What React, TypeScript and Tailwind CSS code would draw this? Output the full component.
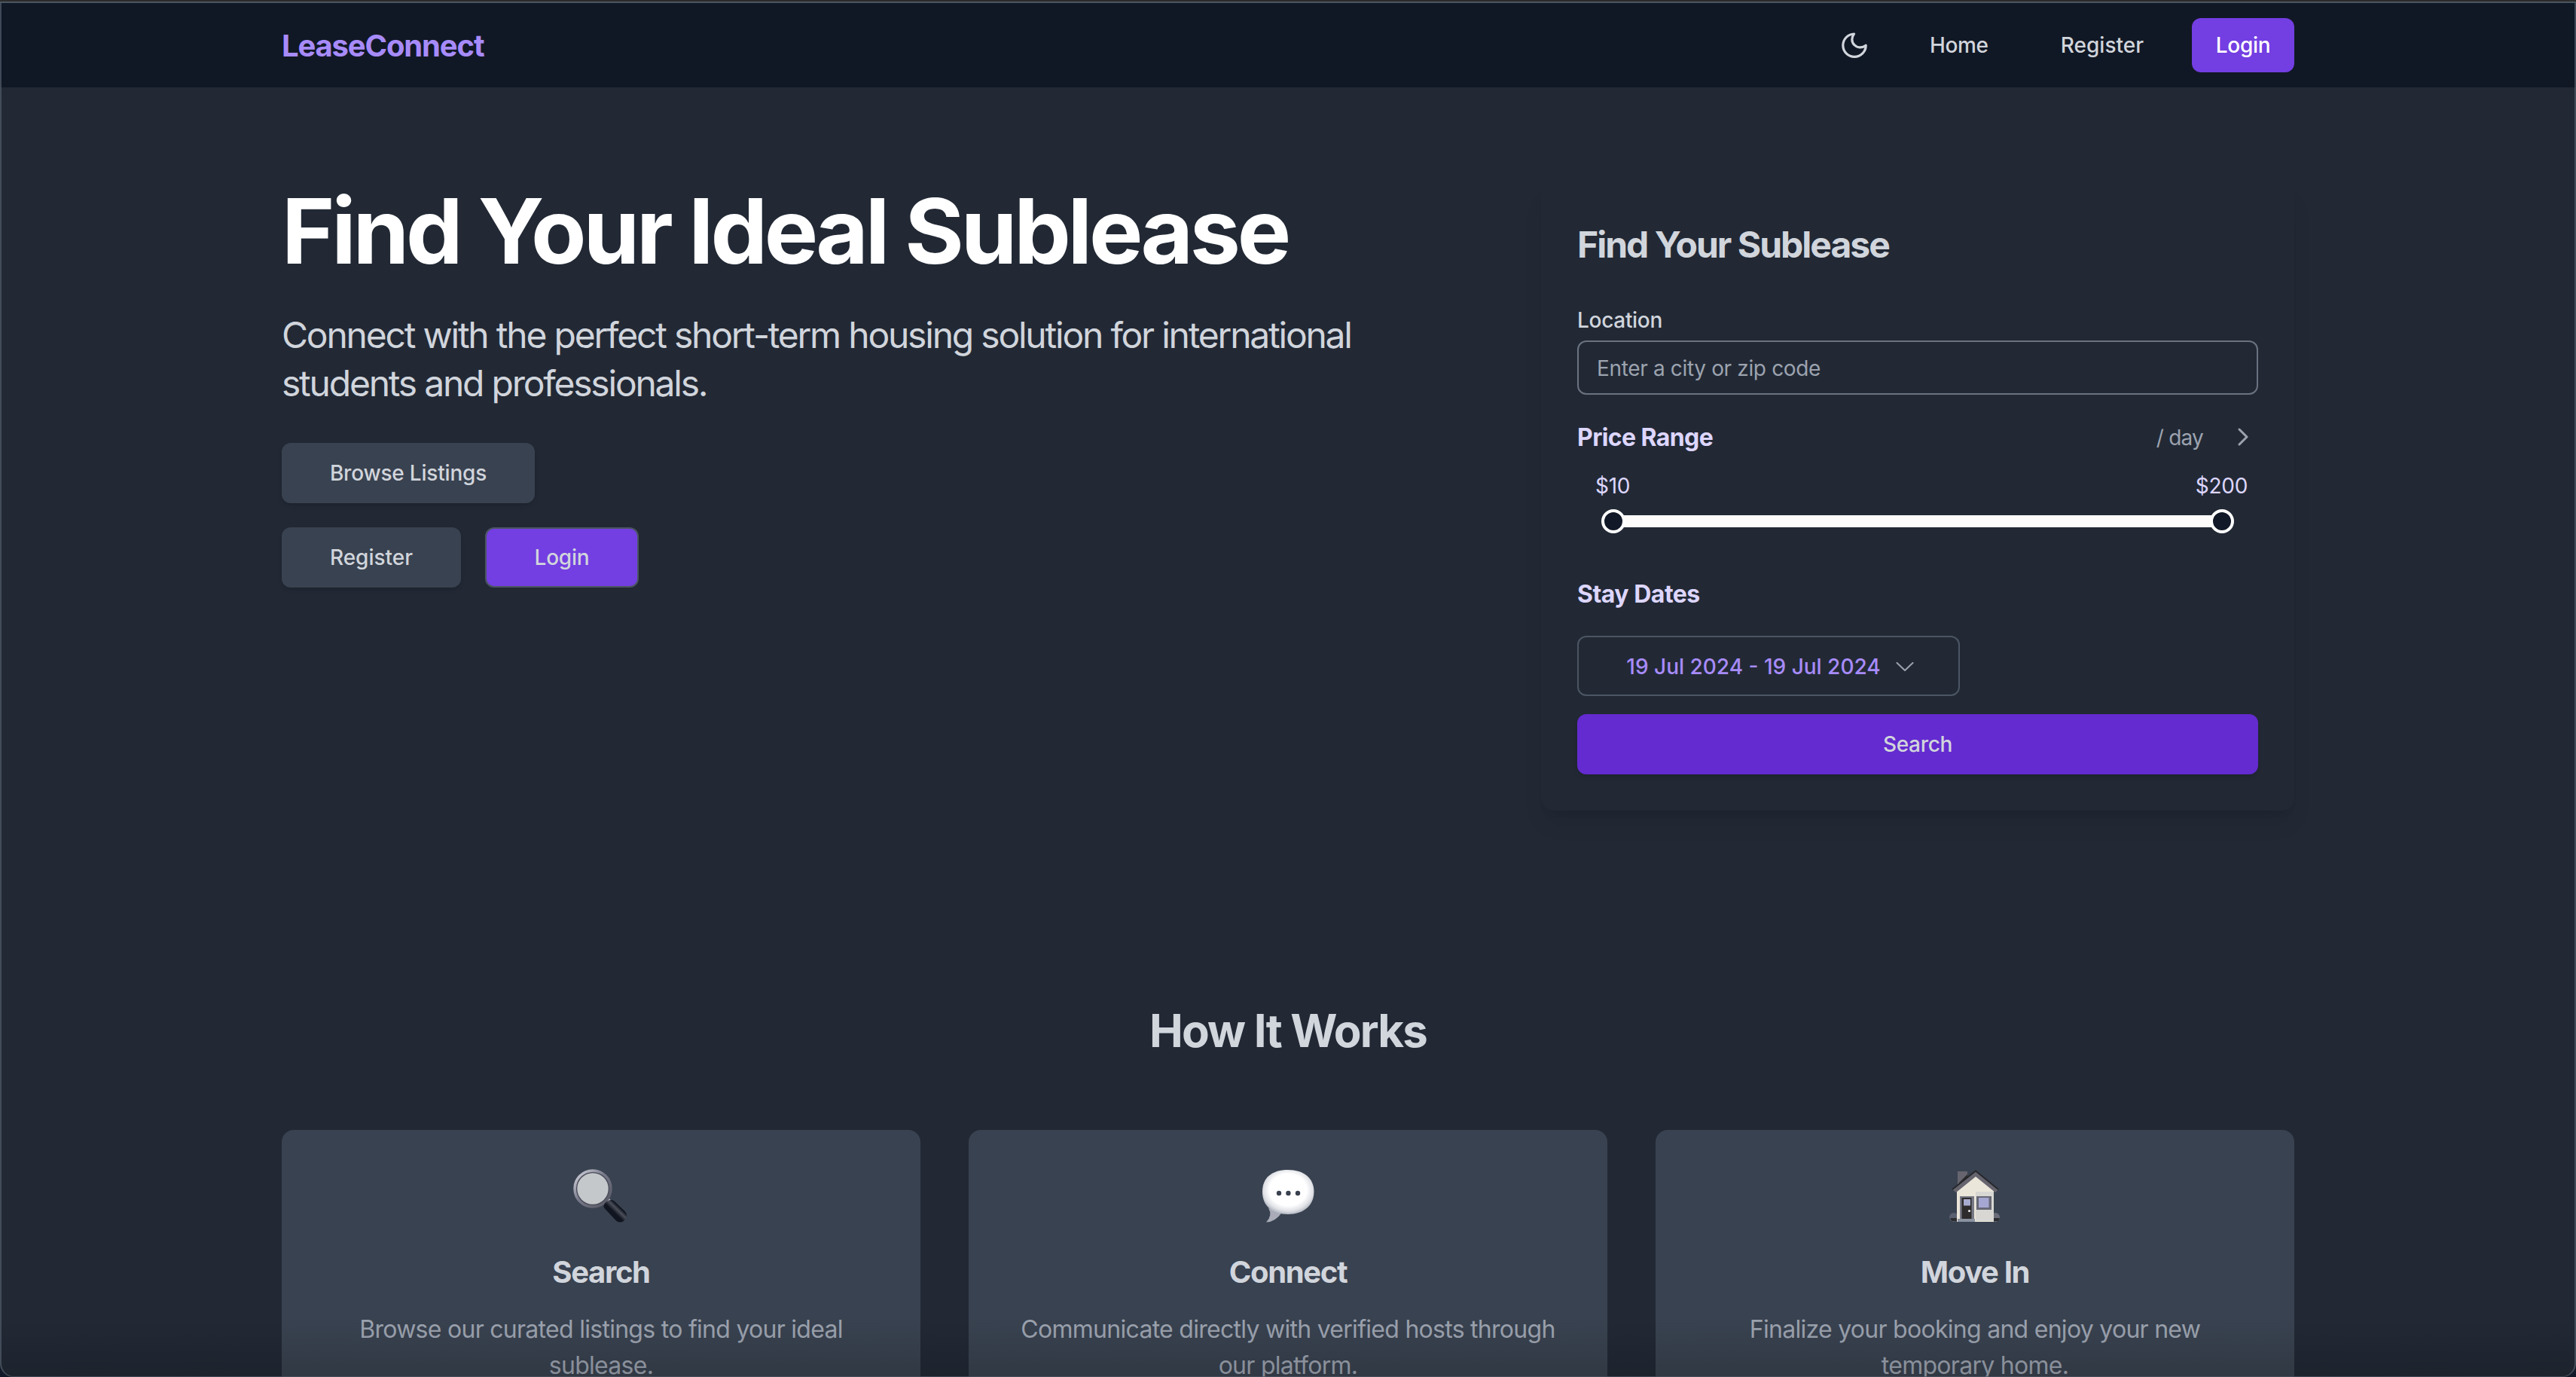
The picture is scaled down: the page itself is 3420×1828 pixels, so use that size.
type Step = {
  title: string;
  description: string;
  icon: React.ReactNode;
};

function MoonIcon() {
  return (
    <svg className="size-10" viewBox="22 30 40 40" fill="none" stroke="currentColor" strokeWidth="3.2" strokeLinecap="round" strokeLinejoin="round">
      <path d="M41.500 35A15.200 15.200 0 1 0 57.200 50.200C52 54.200 45.500 53.500 41.800 49.500C37.800 45.500 38 39.500 41.500 35Z" />
    </svg>
  );
}

function MagnifierIcon() {
  return (
    <svg className="w-40 h-[130px]" viewBox="-1 0 160 130">
      <defs>
        <linearGradient id="rim" x1="0" y1="0" x2="1" y2="1">
          <stop offset="0" stopColor="#d9dae2" />
          <stop offset="0.45" stopColor="#77788a" />
          <stop offset="1" stopColor="#54555f" />
        </linearGradient>
        <linearGradient id="grip" x1="0" y1="1" x2="1" y2="0">
          <stop offset="0.45" stopColor="#10151f" />
          <stop offset="0.58" stopColor="#4b4f5a" />
          <stop offset="0.68" stopColor="#10151f" />
        </linearGradient>
      </defs>
      <path d="M84 77l6-6 5 6-6 7z" fill="#b9bac4" />
      <circle cx="68" cy="58" r="23.500" fill="#b8c0c6" stroke="url(#rim)" strokeWidth="4.500" />
      <circle cx="68" cy="58" r="21.400" fill="#c5c8ca" stroke="#474a58" strokeWidth="1.400" />
      <path d="M84 77.500q4-5 9-4.500q2 0 4 2l14 13.500q3 4 1.500 8q-3 6-8.500 6q-3 0-5-2L84 84.500q-3-3 0-7z" fill="url(#grip)" />
    </svg>
  );
}

function SpeechIcon() {
  return (
    <svg className="w-40 h-[130px]" viewBox="0 0 160 130">
      <defs>
        <radialGradient id="bubble" cx="0.5" cy="0.45" r="0.58">
          <stop offset="0.62" stopColor="#ffffff" />
          <stop offset="0.82" stopColor="#dfe1e6" />
          <stop offset="1" stopColor="#a3a8b3" />
        </radialGradient>
      </defs>
      <path d="M54 84q6 9-3 18.500q12 0 21-13z" fill="#a9acb8" />
      <path d="M80 33c21 0 34.500 11 34.500 29S101 92 80 92S46 81 46 62S59 33 80 33z" fill="url(#bubble)" />
      <circle cx="68" cy="64" r="3.200" fill="#39414f" />
      <circle cx="80.400" cy="64" r="3.200" fill="#39414f" />
      <circle cx="93" cy="64" r="3.200" fill="#39414f" />
    </svg>
  );
}

function HouseIcon() {
  return (
    <svg className="w-40 h-[130px]" viewBox="2 0 160 130">
      <circle cx="54" cy="96" r="6" fill="#5b6070" />
      <circle cx="109" cy="96" r="6" fill="#6b6e7a" />
      <path d="M49 97h11v4H51zM104 97h11l-2 4h-9z" fill="#2c2d31" />
      <path d="M59 35h13v10L59 56z" fill="#66646e" />
      <path d="M61 50l11-11v7l-11 10z" fill="#2b2b2b" />
      <path d="M58 60l25-20 24 20v42H58z" fill="#ebe6da" />
      <path d="M83 62h24v39H83z" fill="#c9cbcd" opacity="0.55" />
      <path d="M52 59l31-24 30 24-4 4-26-21-26 21z" fill="#66646e" />
      <path d="M52 59l31-24.500L113 59" fill="none" stroke="#25262a" strokeWidth="1.800" />
      <path d="M62 68h19v31H62z" fill="#777986" />
      <path d="M64.500 70h13v28h-13z" fill="#2d2b2b" />
      <path d="M67 72h9v8.500h-9z" fill="#a8abd0" />
      <circle cx="74.500" cy="87.500" r="1.600" fill="#e8e8e8" />
      <path d="M59 98h23v4H59z" fill="#8a92a0" />
      <path d="M84 68h20v18H84z" fill="#666875" />
      <path d="M87 70h13.500v13H87z" fill="#a6a6d2" />
    </svg>
  );
}

const steps: Step[] = [
  {
    title: 'Search',
    description: 'Browse our curated listings to find your ideal sublease.',
    icon: <MagnifierIcon />,
  },
  {
    title: 'Connect',
    description: 'Communicate directly with verified hosts through our platform.',
    icon: <SpeechIcon />,
  },
  {
    title: 'Move In',
    description: 'Finalize your booking and enjoy your new temporary home.',
    icon: <HouseIcon />,
  },
];

function Navbar() {
  return (
    <header className="h-[116px] bg-[#111825] border-t-2 border-[#2d2b2b]">
      <div className="h-0.5 bg-[#4b5563]" />
      <nav className="h-28 mx-auto w-[2672px] flex items-center justify-between">
        <span className="pt-0.5 text-[40px] leading-[56px] font-bold text-[#a78bfa] tracking-[-1.15px]">LeaseConnect</span>
        <div className="flex items-center text-[28px] leading-10 font-medium text-gray-300">
          <button className="mr-20">
            <MoonIcon />
          </button>
          <a className="mr-24 tracking-[-0.3px]">Home</a>
          <a className="mr-16">Register</a>
          <a className="w-[136px] h-[72px] rounded-xl bg-[#733ee2] text-white tracking-[-0.3px] flex items-center justify-center">Login</a>
        </div>
      </nav>
    </header>
  );
}

function Hero() {
  return (
    <div className="pt-[131px]">
      <h1 className="text-[120px] leading-[120px] font-[750] text-white tracking-[-4.2px] whitespace-nowrap">Find Your Ideal Sublease</h1>
      <p className="mt-[46px] text-[48px] leading-[64px] text-gray-300 tracking-[-2.22px] whitespace-nowrap">
        Connect with the perfect short-term housing solution for international
        <br />
        students and professionals.
      </p>
      <div className="mt-[47px] flex flex-col gap-8 text-[28px] font-medium text-gray-300">
        <button className="w-[336px] h-20 rounded-xl bg-[#394250] shadow-md tracking-[-0.2px]">Browse Listings</button>
        <div className="flex gap-8">
          <button className="w-[238px] h-20 rounded-xl bg-[#394250] shadow-md">Register</button>
          <button className="w-[204px] h-20 rounded-xl bg-[#733ee2] border-2 border-[#4b5563] tracking-[-0.2px]">Login</button>
        </div>
      </div>
    </div>
  );
}

function SearchCard() {
  return (
    <div className="mt-[130px] w-[1000px] h-[830px] p-12 rounded-2xl bg-[#222935] shadow-[0_20px_30px_-6px_rgba(0,0,0,0.1),0_8px_12px_-8px_rgba(0,0,0,0.1)]">
      <h2 className="-mt-px text-[48px] leading-[64px] font-[650] text-gray-300 tracking-[-2px]">Find Your Sublease</h2>
      <label className="block mt-[47px] mb-[7px] pt-px text-[28px] leading-10 font-medium text-gray-300 tracking-[-0.3px]">Location</label>
      <div className="h-[72px] px-6 pt-0.5 flex items-center rounded-xl border-2 border-[#6b7280] text-[28px] text-[#9ca3af] tracking-[-0.35px]">
        Enter a city or zip code
      </div>

      <div className="mt-8 h-12 flex items-center">
        <h3 className="pt-0.5 text-[32px] font-[650] text-[#ddd6fe] tracking-[-0.6px]">Price Range</h3>
        <span className="ml-auto pt-0.5 text-[28px] text-[#9ca3af] tracking-[-0.8px]">/ day</span>
        <svg className="ml-[46px] mr-[13px] w-[14px] h-6" viewBox="0 0 14 24" fill="none" stroke="#9ca3af" strokeWidth="3" strokeLinecap="round" strokeLinejoin="round">
          <path d="M2 2l10 10L2 22" />
        </svg>
      </div>
      <div className="mt-5 h-10 pt-0.5 pl-6 pr-[14px] flex items-center justify-between text-[28px] text-[#ddd6fe] tracking-[-0.3px]">
        <span>$10</span>
        <span>$200</span>
      </div>
      <div className="mt-3 mx-8 h-8 flex items-center">
        <span className="size-8 shrink-0 rounded-full border-4 border-white bg-[#111827] z-10" />
        <span className="h-4 -mx-1 grow bg-[#fdfcfb]" />
        <span className="size-8 shrink-0 rounded-full border-4 border-white bg-[#111827] z-10" />
      </div>

      <h3 className="mt-14 pt-px text-[32px] leading-[48px] font-[650] text-[#ddd6fe] tracking-[-0.5px]">Stay Dates</h3>
      <button className="mt-[31px] w-[508px] h-20 pl-1 flex items-center justify-center rounded-xl border-2 border-[#4b5563] text-[28px] font-medium text-[#a78bfa]">
        <span className="pt-px">19 Jul 2024 - 19 Jul 2024</span>
        <svg className="ml-5 mt-0.5 w-6 h-3" viewBox="0 0 24 12" fill="none" stroke="#9ca3af" strokeWidth="2" strokeLinecap="round" strokeLinejoin="round">
          <path d="M1.500 1L12 11 22.500 1" />
        </svg>
      </button>
      <button className="mt-6 w-full h-20 rounded-xl bg-[#642bd0] text-[28px] font-medium text-gray-300 shadow-md tracking-[-0.3px]">Search</button>
    </div>
  );
}

function StepCard({ step }: { step: Step }) {
  return (
    <div className="h-[460px] pt-5 rounded-2xl bg-[#394250] flex flex-col items-center text-center">
      {step.icon}
      <h3 className="mt-[11px] text-[40px] leading-[56px] font-[650] text-gray-300 tracking-[-1.35px]">{step.title}</h3>
      <p className="mt-6 px-16 text-[32px] leading-[48px] text-[#9ca3af] tracking-[-0.72px]">{step.description}</p>
    </div>
  );
}

export default function App() {
  return (
    <div className="relative w-[3420px] h-[1828px] overflow-hidden bg-[#222935] font-['Inter','Liberation_Sans',sans-serif]">
      <Navbar />
      <main className="mx-auto w-[2672px]">
        <section className="h-[1216px] flex justify-between items-start">
          <Hero />
          <SearchCard />
        </section>
        <section>
          <h2 className="text-center text-[60px] leading-[72px] font-bold text-gray-300 tracking-[-1.8px]">How It Works</h2>
          <div className="mt-24 grid grid-cols-3 gap-16">
            {steps.map((step) => (
              <StepCard key={step.title} step={step} />
            ))}
          </div>
        </section>
      </main>
      {/* shade and frame along the window edge */}
      <div className="absolute inset-x-0 bottom-0 h-20 bg-linear-to-b from-transparent to-black/15" />
      <div className="absolute inset-x-0 top-1 bottom-0 rounded-b-[18px] border-x-2 border-b border-[#4b5563]/80 shadow-[0_0_0_20px_#111827] [clip-path:inset(0_0_-20px_0)]" />
    </div>
  );
}
